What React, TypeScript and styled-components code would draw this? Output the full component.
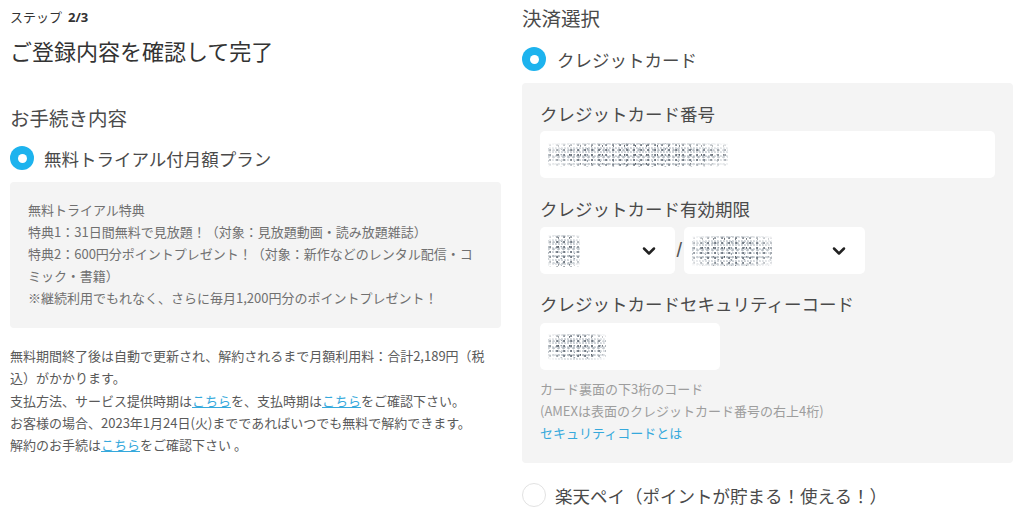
import React from "react";
import styled, { createGlobalStyle } from "styled-components";
import { ChevronDown } from "lucide-react";

const Global = createGlobalStyle`
  html, body { margin: 0; padding: 0; background: #fff; }
  body {
    font-family: "Noto Sans CJK JP", "Noto Sans", sans-serif;
    color: #333;
    -webkit-font-smoothing: antialiased;
  }
  * { box-sizing: border-box; }
`;

const Page = styled.div`
  display: grid;
  grid-template-columns: 491px 491px;
  column-gap: 21px;
  padding: 0 10px;
  width: 1024px;
  height: 514px;
  overflow: hidden;
`;

const Column = styled.div<{ $top: number }>`
  display: flex;
  flex-direction: column;
  padding-top: ${(p) => p.$top}px;
`;

const Step = styled.div`
  font-size: 13px;
  line-height: 20px;
  color: #333;
  b { font-family: "Open Sans", "Noto Sans", sans-serif; font-weight: 700; margin-left: 6px; }
`;

const Title = styled.h1`
  margin: 8px 0 0;
  font-size: 22px;
  line-height: 30px;
  font-weight: 400;
  color: #333;
`;

const SectionTitle = styled.h2<{ $mt: number }>`
  margin: ${(p) => p.$mt}px 0 0;
  font-size: 19.5px;
  line-height: 28px;
  font-weight: 400;
  color: #4a4a4a;
`;

const RadioRow = styled.div<{ $mt: number; $gap: number }>`
  display: flex;
  align-items: center;
  gap: ${(p) => p.$gap}px;
  margin-top: ${(p) => p.$mt}px;
  height: 24px;
  font-size: 17.5px;
  color: #4a4a4a;
`;

const RadioDot = styled.span<{ $on?: boolean }>`
  flex: none;
  width: 24px;
  height: 24px;
  border-radius: 50%;
  display: flex;
  align-items: center;
  justify-content: center;
  background: ${(p) => (p.$on ? "#1db3ee" : "#fff")};
  border: ${(p) => (p.$on ? "none" : "1px solid #e2e2e2")};
  &::after {
    content: "";
    display: ${(p) => (p.$on ? "block" : "none")};
    width: 9px;
    height: 9px;
    border-radius: 50%;
    background: #fff;
  }
`;

const GrayBox = styled.div<{ $pad: string; $mt: number }>`
  margin-top: ${(p) => p.$mt}px;
  background: #f4f4f4;
  border-radius: 4px;
  padding: ${(p) => p.$pad};
`;

const BoxText = styled.div`
  font-size: 13px;
  line-height: 22px;
  color: #707070;
`;

const Notes = styled.div`
  margin-top: 17px;
  font-size: 13px;
  line-height: 22.3px;
  color: #5a5a5a;
  p { margin: 0; }
`;

const Link = styled.a`
  color: #36a9dc;
  text-decoration: underline;
  cursor: pointer;
`;

const Field = styled.div<{ $mt: number }>`
  margin-top: ${(p) => p.$mt}px;
  display: flex;
  flex-direction: column;
`;

const Label = styled.div<{ $mb: number }>`
  font-size: 17.5px;
  line-height: 26px;
  color: #4a4a4a;
  margin-bottom: ${(p) => p.$mb}px;
`;

const Input = styled.div<{ $w?: number }>`
  height: 47px;
  width: ${(p) => (p.$w ? `${p.$w}px` : "100%")};
  background: #fff;
  border-radius: 5px;
  display: flex;
  align-items: center;
  padding: 0 8px;
  position: relative;
`;

const SelectRow = styled.div`
  display: flex;
  align-items: center;
  gap: 1.5px;
`;

const Slash = styled.span`
  font-family: "Liberation Sans", sans-serif;
  font-size: 20px;
  color: #555;
`;

const Chevron = styled.span`
  position: absolute;
  right: 16px;
  top: 50%;
  transform: translateY(-50%);
  display: flex;
  color: #222;
`;

const Noise = styled.span<{ $w: number; $h: number }>`
  display: block;
  width: ${(p) => p.$w}px;
  height: ${(p) => p.$h}px;
  opacity: 0.8;
  background-image:
    radial-gradient(circle at 30% 40%, #4f5a66 0.7px, transparent 1.2px),
    radial-gradient(circle at 70% 60%, #a3acb4 0.9px, transparent 1.5px),
    radial-gradient(circle at 50% 20%, #2e3640 0.6px, transparent 1px),
    radial-gradient(circle at 20% 80%, #c2c8ce 1px, transparent 1.6px),
    radial-gradient(circle at 80% 30%, #7e8a96 0.7px, transparent 1.2px);
  background-size: 7px 5px, 5px 7px, 11px 9px, 3px 4px, 13px 6px;
  background-position: 0 0, 2px 3px, 5px 1px, 1px 2px, 3px 4px;
  -webkit-mask-image: radial-gradient(ellipse at center, #000 55%, transparent 100%);
  mask-image: radial-gradient(ellipse at center, #000 55%, transparent 100%);
`;

const Hints = styled.div`
  margin-top: 8px;
  font-size: 13px;
  line-height: 22px;
  color: #9d9d9d;
  p { margin: 0; }
`;

const HintLink = styled.a`
  color: #36a9dc;
  text-decoration: none;
  cursor: pointer;
`;

export default function App() {
  return (
    <>
      <Global />
      <Page>
        <Column $top={7}>
          <Step>
            ステップ<b>2/3</b>
          </Step>
          <Title>ご登録内容を確認して完了</Title>
          <SectionTitle $mt={39}>お手続き内容</SectionTitle>
          <RadioRow $mt={14} $gap={10}>
            <RadioDot $on />
            無料トライアル付月額プラン
          </RadioRow>
          <GrayBox $mt={12} $pad="17px 18px 19px 18px">
            <BoxText>
              無料トライアル特典
              <br />
              特典1：31日間無料で見放題！（対象：見放題動画・読み放題雑誌）
              <br />
              特典2：600円分ポイントプレゼント！（対象：新作などのレンタル配信・コミック・書籍）
              <br />
              ※継続利用でもれなく、さらに毎月1,200円分のポイントプレゼント！
            </BoxText>
          </GrayBox>
          <Notes>
            <p>
              無料期間終了後は自動で更新され、解約されるまで月額利用料：合計2,189円（税込）がかかります。
            </p>
            <p>
              支払方法、サービス提供時期は<Link>こちら</Link>を、支払時期は
              <Link>こちら</Link>をご確認下さい。
            </p>
            <p>お客様の場合、2023年1月24日(火)までであればいつでも無料で解約できます。</p>
            <p>
              解約のお手続は<Link>こちら</Link>をご確認下さい 。
            </p>
          </Notes>
        </Column>

        <Column $top={4}>
          <SectionTitle $mt={0}>決済選択</SectionTitle>
          <RadioRow $mt={15} $gap={11}>
            <RadioDot $on />
            クレジットカード
          </RadioRow>
          <GrayBox $mt={12} $pad="18px 18px 19px 18px">
            <Field $mt={0}>
              <Label $mb={4}>クレジットカード番号</Label>
              <Input>
                <Noise $w={180} $h={24} />
              </Input>
            </Field>
            <Field $mt={18}>
              <Label $mb={5}>クレジットカード有効期限</Label>
              <SelectRow>
                <Input $w={135}>
                  <Noise $w={32} $h={32} />
                  <Chevron>
                    <ChevronDown size={20} strokeWidth={3} />
                  </Chevron>
                </Input>
                <Slash>/</Slash>
                <Input $w={181}>
                  <Noise $w={80} $h={30} />
                  <Chevron>
                    <ChevronDown size={20} strokeWidth={3} />
                  </Chevron>
                </Input>
              </SelectRow>
            </Field>
            <Field $mt={17}>
              <Label $mb={6}>クレジットカードセキュリティーコード</Label>
              <Input $w={180}>
                <Noise $w={58} $h={26} />
              </Input>
            </Field>
            <Hints>
              <p>カード裏面の下3桁のコード</p>
              <p>(AMEXは表面のクレジットカード番号の右上4桁)</p>
              <p>
                <HintLink>セキュリティコードとは</HintLink>
              </p>
            </Hints>
          </GrayBox>
          <RadioRow $mt={20} $gap={9}>
            <RadioDot />
            楽天ペイ（ポイントが貯まる！使える！）
          </RadioRow>
        </Column>
      </Page>
    </>
  );
}
